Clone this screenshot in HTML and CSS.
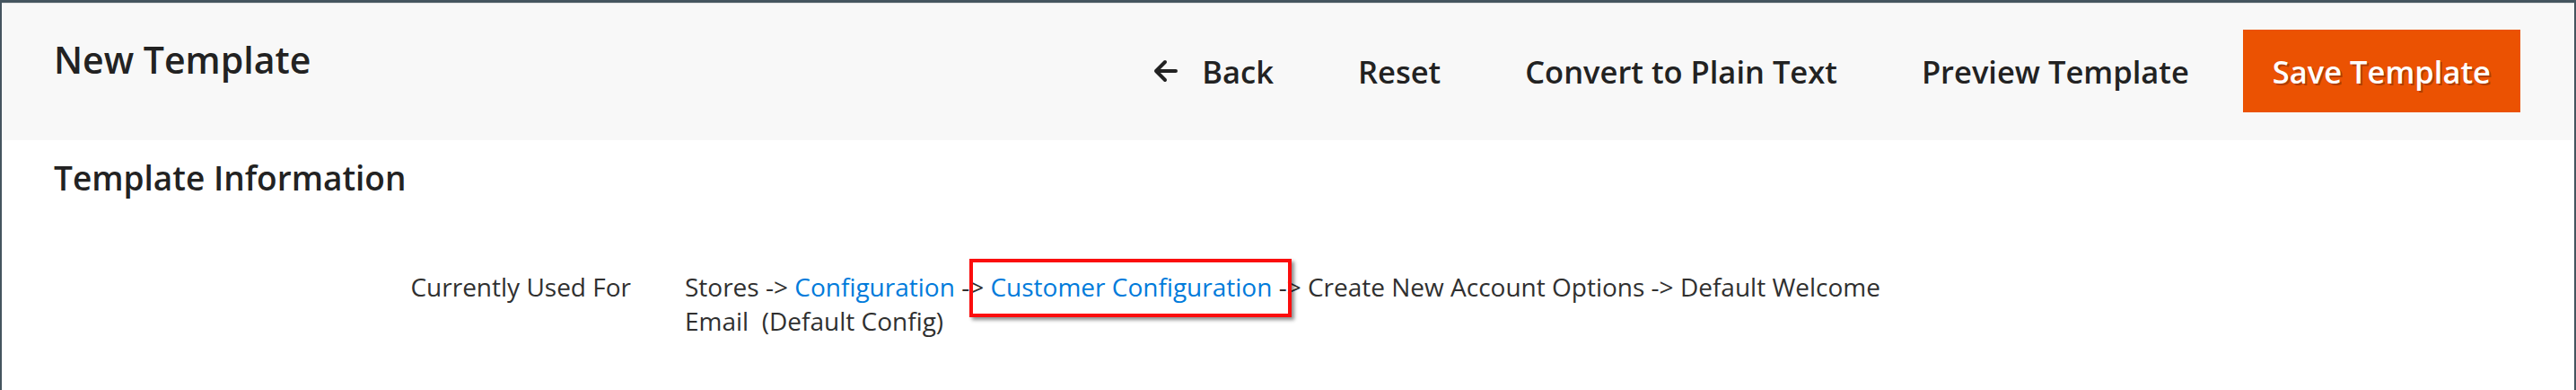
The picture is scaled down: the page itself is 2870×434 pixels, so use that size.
FILE: index.html
```html
<!DOCTYPE html>
<html lang="en">
<head>
<meta charset="utf-8">
<title>New Template</title>
<link rel="stylesheet" href="styles.css">
</head>
<body>
<div class="frame">
  <header class="page-header">
    <h1 class="page-title">New Template</h1>
    <div class="page-actions">
      <button class="action back" type="button">
        <svg class="back-icon" width="29" height="26" viewBox="0 0 29 26" aria-hidden="true">
          <path d="M26 13H4M14 3 4 13 14 23" fill="none" stroke="#222" stroke-width="4" stroke-linecap="round" stroke-linejoin="round"/>
        </svg>
        <span>Back</span>
      </button>
      <button class="action" type="button">Reset</button>
      <button class="action" type="button">Convert to Plain Text</button>
      <button class="action" type="button">Preview Template</button>
      <button class="action primary" type="button">Save Template</button>
    </div>
  </header>
  <section class="section">
    <h2 class="section-title">Template Information</h2>
    <div class="field">
      <div class="field-label">Currently Used For</div>
      <div class="field-value"><span>Stores -&gt; </span><a href="#">Configuration</a><span> -&gt; </span><span class="highlight"><a href="#">Customer Configuration</a></span><span> -&gt; Create New Account Options -&gt; Default Welcome </span><span>Email&nbsp; (Default Config)</span></div>
    </div>
  </section>
</div>
</body>
</html>
```

FILE: styles.css
```css
* { box-sizing: border-box; }
html, body {
  margin: 0;
  padding: 0;
  background: #ffffff;
}
body {
  font-family: "Open Sans", "Noto Sans", sans-serif;
  color: #303030;
}
.frame {
  min-height: 434px;
  border-top: 3px solid #45555f;
  border-left: 2px solid #45555f;
  border-right: 2px solid #45555f;
  background: #ffffff;
}
.page-header {
  height: 153px;
  background: #f8f8f8;
  border-top: 1px solid #e2e2e2;
  display: flex;
  justify-content: space-between;
  align-items: flex-start;
  padding: 0 60px 0 58px;
}
.page-title {
  margin: 34px 0 0;
  font-size: 41px;
  line-height: 56px;
  font-weight: 600;
  color: #222222;
}
.page-actions {
  display: flex;
  align-items: center;
  gap: 26px;
  margin-top: 29px;
}
.action {
  height: 92px;
  display: flex;
  align-items: center;
  gap: 26px;
  padding: 0 34px;
  border: 0;
  background: transparent;
  font-family: "Open Sans", "Noto Sans", sans-serif;
  font-size: 34.5px;
  font-weight: 600;
  color: #222222;
  cursor: pointer;
}
.back-icon { display: block; }
.action.primary {
  padding: 0 33px;
  background: #eb5202;
  color: #ffffff;
  text-shadow: 2px 2px 0 rgba(0, 0, 0, 0.25);
}
.section {
  padding: 0 60px 0 58px;
}
.section-title {
  margin: 17px 0 0;
  font-size: 37px;
  line-height: 50px;
  font-weight: 600;
  color: #222222;
}
.field {
  display: grid;
  grid-template-columns: 643px 1360px;
  column-gap: 60px;
  margin-top: 77px;
  font-size: 28px;
  line-height: 38.4px;
}
.field-label {
  text-align: right;
  color: #303030;
}
.field-value {
  color: #303030;
}
.field-value a {
  color: #007bdb;
  text-decoration: none;
}
.highlight {
  position: relative;
}
.highlight::after {
  content: "";
  position: absolute;
  left: -23px;
  right: -22px;
  top: -12px;
  bottom: -15px;
  border: 4px solid #fb0d0d;
  box-shadow: 3px 3px 4px rgba(0, 0, 0, 0.45);
  pointer-events: none;
}
```
